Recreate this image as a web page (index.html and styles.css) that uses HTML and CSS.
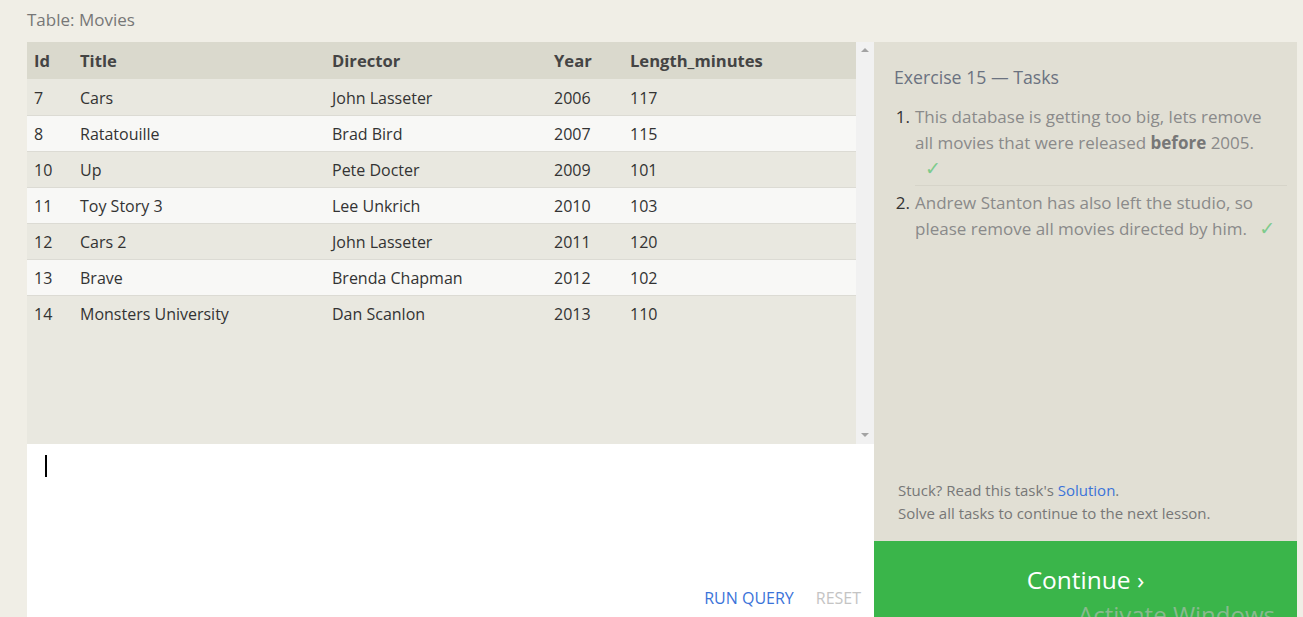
FILE: index.html
```html
<!DOCTYPE html>
<html>
<head>
<meta charset="utf-8">
<link rel="stylesheet" href="styles.css">
</head>
<body>
<div class="page">
  <div class="caption">Table: Movies</div>
  <div class="main">
    <div class="left">
      <div class="results">
        <div class="table-wrap">
          <table class="grid">
            <colgroup><col class="c1"><col class="c2"><col class="c3"><col class="c4"><col class="c5"></colgroup>
            <thead>
              <tr><th>Id</th><th>Title</th><th>Director</th><th>Year</th><th>Length_minutes</th></tr>
            </thead>
            <tbody>
              <tr class="odd"><td>7</td><td>Cars</td><td>John Lasseter</td><td>2006</td><td>117</td></tr>
              <tr class="even"><td>8</td><td>Ratatouille</td><td>Brad Bird</td><td>2007</td><td>115</td></tr>
              <tr class="odd"><td>10</td><td>Up</td><td>Pete Docter</td><td>2009</td><td>101</td></tr>
              <tr class="even"><td>11</td><td>Toy Story 3</td><td>Lee Unkrich</td><td>2010</td><td>103</td></tr>
              <tr class="odd"><td>12</td><td>Cars 2</td><td>John Lasseter</td><td>2011</td><td>120</td></tr>
              <tr class="even"><td>13</td><td>Brave</td><td>Brenda Chapman</td><td>2012</td><td>102</td></tr>
              <tr class="odd last"><td>14</td><td>Monsters University</td><td>Dan Scanlon</td><td>2013</td><td>110</td></tr>
            </tbody>
          </table>
        </div>
        <div class="scrollbar">
          <span class="arrow up"></span>
          <span class="arrow down"></span>
        </div>
      </div>
      <div class="editor">
        <div class="cursor"></div>
        <div class="actions">
          <span class="run">RUN QUERY</span>
          <span class="reset">RESET</span>
        </div>
      </div>
    </div>
    <div class="right">
      <div class="tasks">
        <h2 class="tasks-title">Exercise 15 — Tasks</h2>
        <ol class="task-list">
          <li class="task">
            <span class="num">1.</span>
            <span class="text">This database is getting too big, lets remove all movies that were released <b>before</b> 2005. <span class="check own-line">✓</span></span>
          </li>
          <li class="task">
            <span class="num">2.</span>
            <span class="text">Andrew Stanton has also left the studio, so please remove all movies directed by him. <span class="check">✓</span></span>
          </li>
        </ol>
        <div class="help">
          <div>Stuck? Read this task's <span class="link">Solution</span>.</div>
          <div>Solve all tasks to continue to the next lesson.</div>
        </div>
      </div>
      <div class="continue">Continue ›</div>
    </div>
  </div>
  <div class="watermark">Activate Windows</div>
</div>
</body>
</html>
```
FILE: styles.css
```css
html, body {
  margin: 0;
  padding: 0;
  height: 100%;
  overflow: hidden;
}
body {
  background: #f0eee6;
  font-family: "Open Sans", "Liberation Sans", sans-serif;
  color: #333;
}
.page {
  position: relative;
  padding: 0 6px 0 27px;
  height: 617px;
  display: flex;
  flex-direction: column;
}
.caption {
  font-size: 17px;
  color: #777;
  height: 42px;
  line-height: 40px;
}
.main {
  flex: 1;
  display: flex;
}
.left {
  width: 847px;
  display: flex;
  flex-direction: column;
}
.results {
  height: 402px;
  display: flex;
  background: #e9e8e0;
}
.table-wrap {
  flex: 1;
}
.grid {
  width: 100%;
  border-collapse: collapse;
  table-layout: fixed;
  font-size: 16px;
}
.c1 { width: 46px; }
.c2 { width: 252px; }
.c3 { width: 222px; }
.c4 { width: 76px; }
.grid th {
  background: #dad9cd;
  text-align: left;
  font-weight: 700;
  font-size: 16.6px;
  color: #444;
  height: 37px;
  padding: 0 7px;
  box-sizing: border-box;
}
.grid td {
  height: 36px;
  padding: 2px 7px 0 7px;
  box-sizing: border-box;
  color: #333;
  border-bottom: 1px solid #dcdbd4;
}
.grid tr.last td { border-bottom: none; }
.grid tr.odd td { background: #e9e8e0; }
.grid tr.even td { background: #f8f8f6; }
.scrollbar {
  width: 18px;
  background: #f1f1f1;
  position: relative;
}
.arrow {
  position: absolute;
  left: 5px;
  width: 0;
  height: 0;
  border-left: 4px solid transparent;
  border-right: 4px solid transparent;
}
.arrow.up {
  top: 6px;
  border-bottom: 4px solid #a3a3a3;
}
.arrow.down {
  bottom: 7px;
  border-top: 4px solid #a3a3a3;
}
.editor {
  flex: 1;
  background: #fff;
  display: flex;
  flex-direction: column;
  justify-content: space-between;
  padding: 11px 0 0 18px;
  box-sizing: border-box;
}
.cursor {
  width: 2px;
  height: 22px;
  background: #000;
}
.actions {
  display: flex;
  justify-content: flex-end;
  gap: 22px;
  font-size: 16px;
  padding: 0 13px 8px 0;
}
.run { color: #3b73d9; }
.reset { color: #c4c4c4; }
.right {
  width: 423px;
  display: flex;
  flex-direction: column;
  background: #e1dfd4;
}
.tasks {
  flex: 1;
  display: flex;
  flex-direction: column;
  padding: 22px 10px 16px 20px;
}
.tasks-title {
  margin: 0;
  font-size: 17.7px;
  font-weight: 400;
  color: #6b7280;
  line-height: 26px;
}
.task-list {
  list-style: none;
  margin: 14px 0 0 0;
  padding: 0;
}
.task {
  display: flex;
  font-size: 17px;
  line-height: 26px;
  color: #8a8a8a;
  padding: 0 0 5px 0;
}
.task + .task {
  border-top: 1px solid #d6d4c9;
  padding-top: 4px;
  margin-left: 21px;
}
.task + .task .num { margin-left: -21px; }
.num {
  width: 16px;
  flex: none;
  color: #333;
  text-align: right;
  margin-right: 5px;
}
.text {
  flex: 1;
  padding-right: 6px;
}
.text b { color: #777; font-weight: 700; }
.check {
  color: #7dcb8c;
  font-family: "DejaVu Sans", sans-serif;
  font-size: 19px;
  line-height: 20px;
  margin-left: 8px;
}
.check.own-line {
  display: block;
  margin-left: 10px;
  line-height: 24px;
}
.help {
  margin-top: auto;
  font-size: 15px;
  line-height: 23px;
  color: #777;
  padding-left: 4px;
}
.link { color: #3b73d9; }
.continue {
  height: 76px;
  background: #3ab54a;
  color: #fff;
  font-size: 24.5px;
  text-align: center;
  line-height: 78px;
}
.watermark {
  position: absolute;
  left: 1078px;
  top: 598px;
  font-size: 24px;
  color: rgba(190, 190, 190, 0.6);
  white-space: nowrap;
}
```
